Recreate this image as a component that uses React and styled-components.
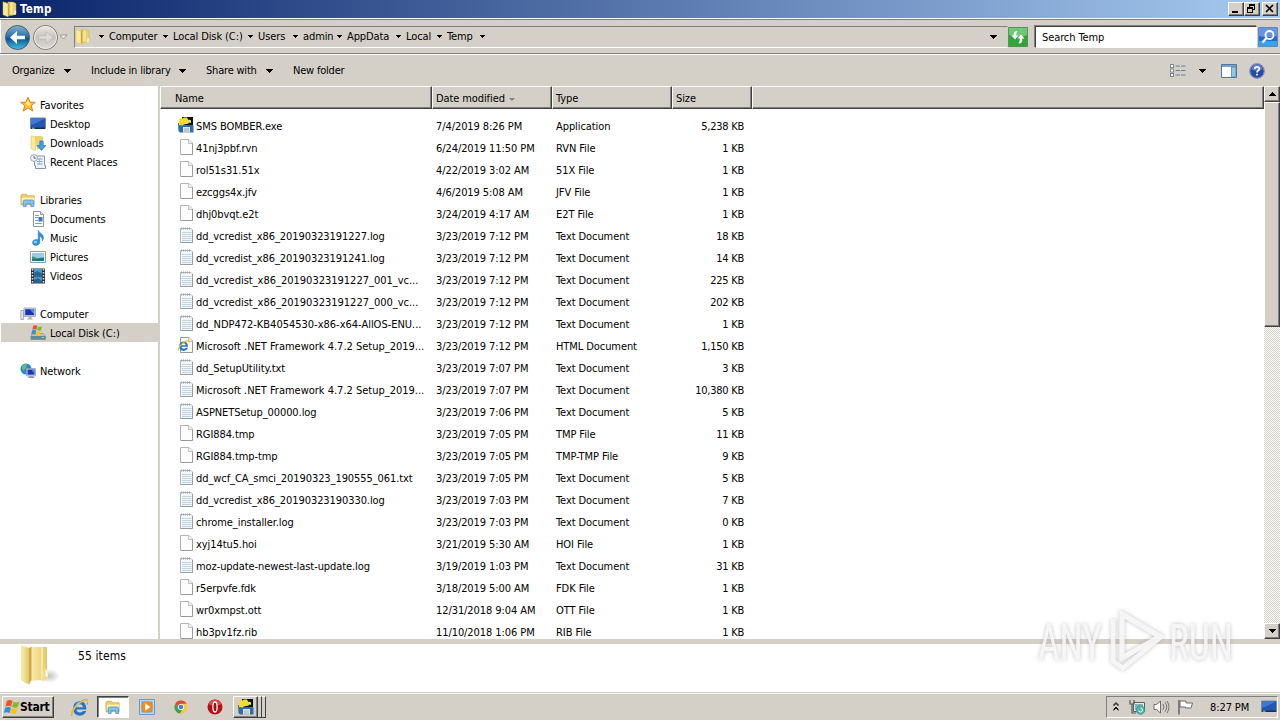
import React from 'react'
import styled, { createGlobalStyle, css } from 'styled-components'

const GlobalStyle = createGlobalStyle`
  * { box-sizing: border-box; }
  html, body { margin: 0; padding: 0; overflow: hidden; }
  svg { display: block; flex: none; }
`;

const face = '#d4d0c8'

const raised = css`
  background: ${face};
  border: 1px solid;
  border-color: #fff #404040 #404040 #fff;
  box-shadow: inset -1px -1px 0 #808080;
`;

const Screen = styled.div`
  width: 1280px;
  height: 720px;
  display: flex;
  flex-direction: column;
  background: ${face};
  color: #000;
  font-family: "DejaVu Sans Condensed", "DejaVu Sans", sans-serif;
  font-stretch: condensed;
  font-size: 11px;
  letter-spacing: -0.1px;
  line-height: 14px;
  white-space: nowrap;
  cursor: default;
  position: relative;
`;

const TitleBar = styled.div`
  height: 18px;
  display: flex;
  align-items: center;
  gap: 2px;
  padding: 0 2px;
  background: linear-gradient(90deg, #0a246a, #a6caf0);
`;
const Title = styled.span`
  flex: 1;
  color: #fff;
  font-weight: 700;
  font-size: 11.5px;
  letter-spacing: 0.2px;
`;
const Controls = styled.div`
  display: flex;
  align-self: flex-end;
`;
const ControlButton = styled.div`
  ${raised}
  width: 16px;
  height: 14px;
  margin-left: ${(p) => p.$gap || 0}px;
  margin-bottom: 2px;
`;

const AddressRow = styled.div`
  height: 37px;
  display: flex;
  align-items: center;
  padding-left: 4px;
  border-top: 1px solid #fff;
  border-bottom: 1px solid #fff;
  box-shadow: inset 0 1px 0 #808080, inset 0 -1px 0 #808080, inset 1px 0 0 #fff;
`;
const AddressBox = styled.div`
  width: 934px;
  height: 22px;
  margin-left: 6px;
  padding-right: 10px;
  display: flex;
  align-items: center;
  border: 1px solid;
  border-color: #808080 ${face} #fff #808080;
`;
const Crumb = styled.span`
  flex: none;
  width: ${(p) => p.$w}px;
  padding-right: 5px;
  display: flex;
  align-items: center;
  justify-content: space-between;
`;
const CrumbRoot = styled.span`
  width: 18px;
  padding-left: 7px;
`;
const Spacer = styled.div`
  flex: 1;
`;
const SearchBox = styled.div`
  width: 222px;
  height: 22px;
  margin: 0 1px 0 7px;
  padding: 4px 6px;
  background: #fff;
  border: 1px solid;
  border-color: #404040 #fff #fff #404040;
  box-shadow: -1px -1px 0 #808080;
`;

const ToolBar = styled.div`
  height: 31px;
  display: flex;
  align-items: center;
  padding: 0 15px 0 12px;
  letter-spacing: -0.2px;
`;
const ToolItem = styled.div`
  width: ${(p) => p.$w}px;
  margin-right: ${(p) => p.$gap}px;
  display: flex;
  align-items: center;
  justify-content: space-between;
`;

const Body = styled.div`
  height: 553px;
  display: flex;
`;
const Sidebar = styled.div`
  width: 160px;
  padding: 9px 0 0 1px;
  background: #fff;
  border-right: 2px solid ${face};
`;
const SideRow = styled.div`
  height: 19px;
  margin-top: ${(p) => (p.$first ? 19 : 0)}px;
  padding-left: ${(p) => (p.$child ? 29 : 19)}px;
  display: flex;
  align-items: center;
  gap: 4px;
  background: ${(p) => (p.$active ? face : 'transparent')};
`;
const SideName = styled.span`
  padding-top: 2px;
`;
const Main = styled.div`
  flex: 1;
  background: #fff;
`;
const HeaderRow = styled.div`
  display: flex;
  height: 23px;
`;
const HeaderCell = styled.div`
  width: ${(p) => p.$w}px;
  padding: 5px 0 0 ${(p) => p.$pad || 3}px;
  display: flex;
  gap: 4px;
  background: ${face};
  border: 1px solid;
  border-color: #fff #404040 #404040 #fff;
  box-shadow: inset -1px -1px 0 #808080;
`;
const Files = styled.div`
  height: 530px;
  padding-top: 6px;
  overflow: hidden;
`;
const FileRow = styled.div`
  height: 22px;
  display: grid;
  grid-template-columns: 18px 240px 120px 108px 80px;
  padding: 0 0 3px 18px;
  align-items: center;
`;
const Cell = styled.span`
  padding-top: 4px;
  letter-spacing: ${(p) => (p.$long ? -0.01 : -0.08)}px;
`;
const FileSize = styled.span`
  padding-top: 4px;
  text-align: right;
  letter-spacing: -0.25px;
`;

const ScrollBar = styled.div`
  width: 16px;
  display: flex;
  flex-direction: column;
  background: repeating-conic-gradient(#fff 0 25%, ${face} 0 50%) 0 0 / 2px 2px;
`;
const ScrollButton = styled.div`
  ${raised}
  height: 16px;
  display: flex;
  align-items: center;
  justify-content: center;
`;
const Thumb = styled.div`
  ${raised}
  height: 225px;
`;

const Details = styled.div`
  height: 53px;
  padding: 0 0 0 17px;
  display: flex;
  gap: 17px;
  background: #fff;
  border-top: 5px solid ${face};
`;
const Count = styled.span`
  padding-top: 5px;
  font-size: 12px;
  letter-spacing: 0.1px;
`;

const TaskBar = styled.div`
  height: 28px;
  display: flex;
  align-items: center;
  padding: 1px 2px 0;
  border-top: 1px solid ${face};
  box-shadow: inset 0 1px 0 #fff;
`;
const StartButton = styled.div`
  ${raised}
  width: 52px;
  height: 22px;
  display: flex;
  align-items: center;
  font-weight: 700;
  font-size: 12px;
  letter-spacing: -0.25px;
`;
const Quick = styled.div`
  width: 32px;
  height: 22px;
  margin-left: ${(p) => p.$gap || 0}px;
  display: flex;
  align-items: center;
  justify-content: center;
  ${(p) => p.$active && css`
    background: #fff;
    border: 1px solid;
    border-color: #404040 #fff #fff #404040;
    box-shadow: inset 1px 1px 0 #808080;
  `}
`;
const Stack = styled.div`
  display: flex;
  height: 22px;
  margin-left: 2px;
`;
const StackItem = styled.div`
  ${raised}
  width: ${(p) => p.$w}px;
  display: flex;
  align-items: center;
  justify-content: center;
`;
const StackEdge = styled.div`
  width: 4px;
  background: ${face};
  border-top: 1px solid #fff;
  border-right: 1px solid #404040;
  border-bottom: 1px solid #404040;
`;
const Tray = styled.div`
  width: 172px;
  height: 22px;
  padding: 0 0 0 6px;
  display: flex;
  align-items: center;
  gap: 7px;
  border: 1px solid;
  border-color: #808080 #fff #fff #808080;
`;
const Clock = styled.span`
  width: 44px;
  margin-left: 9px;
  padding-top: 1px;
`;
const Watermark = styled.svg`
  position: absolute;
  left: 1030px;
  top: 602px;
  overflow: visible;
`;

/* icons */

const Arrow = ({ size = 7, fill = '#000', up }) => (
  <svg width={size} height={Math.ceil(size / 2)} viewBox="0 0 8 4" shapeRendering="crispEdges">
    <path d={up ? 'M0 4H8L4 0Z' : 'M0 0H8L4 4Z'} fill={fill} />
  </svg>
)

const FolderIcon = ({ w = 16, h = 16 }) => (
  <svg width={w} height={h} viewBox="0 0 16 16">
    <path d="M6 1h5l3 1.500v10L10 14.500H6z" fill="#ecd16c" stroke="#c9a843" strokeWidth=".4" />
    <path d="M1 .8 6 2.500V15.800L1 13.800z" fill="#fbeaa0" stroke="#d5b64f" strokeWidth=".5" />
    <path d="M6 2.500 7.400 1.500V14L6 15.800z" fill="#c9a545" />
    <path d="M8.300 2h2.200v11H8.300z" fill="#f9e79a" />
    <path d="M12.500 9l1.500 1v3.500l-2.500.5z" fill="#fff8d8" stroke="#d9c476" strokeWidth=".3" />
  </svg>
)

const BigFolder = () => (
  <svg width="44" height="44" viewBox="0 0 44 44">
    <defs>
      <linearGradient id="bf" x1="0" x2="1">
        <stop offset="0" stopColor="#fbeeb0" />
        <stop offset="1" stopColor="#e3c866" />
      </linearGradient>
      <radialGradient id="bs">
        <stop offset="0" stopColor="#999" stopOpacity=".6" />
        <stop offset="1" stopColor="#999" stopOpacity="0" />
      </radialGradient>
    </defs>
    <ellipse cx="32" cy="32" rx="11" ry="7" fill="url(#bs)" />
    <path d="M13 3h17v30l-4 3-13 1z" fill="url(#bf)" />
    <path d="M24 3l2 .5v32l-2 .5z" fill="#f8e9a8" />
    <path d="M27 23l4 5v7l-6 2z" fill="#f1dc8c" />
    <path d="M4 1 12 4v36.500l-8-4z" fill="url(#bf)" />
    <path d="M12 4l2.500-1.500v33l-2.500 5z" fill="#cba94c" />
    <path d="M28.500 25l2 3v5l-2-1z" fill="#fff" />
  </svg>
)

const ExplorerIcon = () => (
  <svg width="16" height="16" viewBox="0 0 17 16">
    <path d="M1 3.500 2 2h5l1 1.500h7V13H1z" fill="#edcf6b" stroke="#c49e3c" strokeWidth=".7" />
    <path d="M2 5.500h13v5H2z" fill="#fff1b4" />
    <path d="M3.500 15V9.500q0-1.500 1.500-1.500h8q1.500 0 1.500 1.500V15H11.500v-3H6.500v3z" fill="#7fc3ee" stroke="#3a87c0" strokeWidth=".7" />
  </svg>
)

const StarIcon = () => (
  <svg width="16" height="16" viewBox="0 0 16 16">
    <path d="M8 .3l2.100 5h5.200l-4.200 3.300 1.700 5.500L8 10.900l-4.800 3.200 1.700-5.500L.7 5.300h5.200z" fill="#ffc832" stroke="#e07f18" />
    <path d="M8 3l1.200 3.300h3L9 8.500 5.500 6.500z" fill="#ffe98b" />
  </svg>
)

const DesktopIcon = ({ w = 16 }) => (
  <svg width={w} height={w} viewBox="0 0 16 16">
    <path d="M.5 2h15v10.500H.5z" fill="#2456b4" stroke="#7888a8" />
    <path d="M1 2.500h14L3 8.500 1 8z" fill="#4079d0" />
    <path d="M1 11.500h14V13H1z" fill="#1a2c58" />
    <path d="M2 11.500h2.500V13H2z" fill="#62b760" />
  </svg>
)

const DownloadsIcon = () => (
  <svg width="16" height="16" viewBox="0 0 16 16">
    <path d="M5 1h6.500l1.500 1v11l-6 1.500z" fill="#ecd16c" />
    <path d="M1 .8 5.500 2v13.500L1 13.500z" fill="#fbeaa0" stroke="#d5b64f" strokeWidth=".5" />
    <path d="M9.800 6h3.400v4.500H16L11.500 15.500 7 10.500h2.800z" fill="#3aa0e8" stroke="#1c6cb4" strokeWidth=".6" />
  </svg>
)

const RecentIcon = () => (
  <svg width="16" height="16" viewBox="0 0 16 16">
    <path d="M4.500 2h10v9.500h1v3H5.500v-3h-1z" fill="#eef3f8" stroke="#8698ac" />
    <path d="M7 5h5.500M7 7.500h5.500M7 10h5.500" stroke="#7fa0c4" />
    <path d="M9.500 4v7" stroke="#a8bdd4" />
    <circle cx="4" cy="4" r="3.400" fill="#f7f9fb" stroke="#9aa6b2" />
    <path d="M4 2v2.200h1.800" fill="none" stroke="#445" strokeWidth=".8" />
  </svg>
)

const DocumentsIcon = () => (
  <svg width="16" height="16" viewBox="0 0 16 16">
    <path d="M3.500.5h7l3 3v12h-10z" fill="#fff" stroke="#8c98a8" />
    <path d="M10.500.5v3h3" fill="#dde5ee" stroke="#8c98a8" />
    <path d="M5 4.500h4M5 6.500h3M5 9.500h3M5 12.500h7" stroke="#7d9cc8" />
    <path d="M8.500 6h4v4.500h-4z" fill="#3f77b8" />
  </svg>
)

const MusicIcon = () => (
  <svg width="16" height="16" viewBox="0 0 16 16">
    <path d="M8.200 0c.5 3 5.300 3.500 5.300 7.500 0 1.500-.5 2.500-1.300 3.500.2-3-.8-4.300-2.400-4.800V12c0 2-1.800 3.500-4 3.500S2.500 14.300 2.500 12.500 4.200 9.500 6.500 9.500h1.700z" fill="#2e8fdc" stroke="#1b6cb0" strokeWidth=".4" />
    <ellipse cx="5.500" cy="12" rx="1.800" ry="1.300" fill="#8fd0fa" />
  </svg>
)

const PicturesIcon = () => (
  <svg width="16" height="16" viewBox="0 0 16 16">
    <path d="M.5 2.500h15v11H.5z" fill="#fff" stroke="#8a9bb0" />
    <path d="M2 4h12v8H2z" fill="#8fd0ee" />
    <path d="M2 8l4 1.500 8-1V12H2z" fill="#23708a" />
    <path d="M2 7.500l3 .5 3 2-6 .5z" fill="#3c9a70" />
  </svg>
)

const VideosIcon = () => (
  <svg width="16" height="16" viewBox="0 0 16 16">
    <path d="M1 .5h14v15H1z" fill="#27303c" />
    <path d="M4 1h8v6.500H4zM4 8.500h8V15H4z" fill="#4a9ad0" />
    <path d="M4 5l3-2 5 2.500v2H4zM4 12l4-2 4 3v2H4z" fill="#276490" />
    <path d="M2.500 1v14M13.500 1v14" stroke="#e8edf2" strokeWidth="1.500" strokeDasharray="1.500 1.500" />
  </svg>
)

const ComputerIcon = () => (
  <svg width="16" height="16" viewBox="0 0 16 16">
    <path d="M.8 4.500h2.700v9H.8z" fill="#dfe3e8" stroke="#8b929c" strokeWidth=".7" />
    <path d="M4 2h11.500v8.500H4z" fill="#d8dce4" stroke="#8f97a8" strokeWidth=".7" />
    <path d="M5.200 3.200h9v6h-9z" fill="#1732b0" />
    <path d="M9.500 3.200h4.700v5z" fill="#5a88ec" />
    <path d="M8.500 10.500h3v1.500l2 1.500h-7l2-1.500z" fill="#aab0bc" />
  </svg>
)

const Flag = () => (
  <>
    <path d="M3 1.500q2.500-1.500 4.500 0L6.500 6Q4.500 4.700 2 6z" fill="#ee5324" />
    <path d="M8.300 2q2 1.200 4.700 0l-1.200 4.300Q9.500 7.400 7.300 6.200z" fill="#80bc28" />
    <path d="M1.800 6.800q2.500-1.200 4.500 0L5.200 11Q3 10 .6 11z" fill="#2a90e0" />
    <path d="M7 7q2.500 1.200 4.600 0l-1.200 4.300q-2.400 1.100-4.500 0z" fill="#fbc319" />
  </>
)

const DiskIcon = () => (
  <svg width="16" height="16" viewBox="0 0 16 16">
    <path d="M2.500 8.500h10.500l2.500 2.500v3.500H.8v-3z" fill="#b4c2ca" stroke="#7a8890" strokeWidth=".6" />
    <path d="M1 11h14.500v3.500H1z" fill="#5e8b96" />
    <path d="M12 12h2v1h-2z" fill="#8df07c" />
    <g transform="translate(.5 -.5) scale(.9)"><Flag /></g>
  </svg>
)

const NetworkIcon = () => (
  <svg width="16" height="16" viewBox="0 0 16 16">
    <circle cx="6" cy="6" r="5.500" fill="#2b86c8" />
    <path d="M2 3q3-3 5-1.500L6 5 3.500 7.500 2 6zM6 8l3 1-2 2.300z" fill="#5cc08a" />
    <path d="M6.500 5.500h9v7.500h-9z" fill="#d8dce8" stroke="#8892b0" strokeWidth=".7" />
    <path d="M7.500 6.500h7v5.200h-7z" fill="#1736b8" />
    <path d="M11 6.500h3.500v4z" fill="#5c88ea" />
    <path d="M9 13.200h4.500l1 1.800H8.200z" fill="#8a94b0" />
  </svg>
)

const BlankFile = () => (
  <svg width="16" height="16" viewBox="0 0 16 16">
    <path d="M2.500.5h8.500l3.500 3.500v11.500h-12z" fill="#fdfdfd" stroke="#b4b4b4" />
    <path d="M3 15.500h11.500V4" fill="none" stroke="#9a9a9a" />
    <path d="M10.500.5V4.500h4" fill="#eee" stroke="#b4b4b4" strokeWidth=".8" />
  </svg>
)

const TextFile = () => (
  <svg width="16" height="16" viewBox="0 0 16 16">
    <path d="M2.500 1.500h10.500l1.500 1.500v12.500h-12z" fill="#f3f7fa" stroke="#b0b6ba" />
    <path d="M3 1.500h10" stroke="#9da3a8" strokeWidth="2" strokeDasharray="1 1" />
    <path d="M4 5.500h9.500M4 7.500h9.500M4 9.500h9.500M4 11.500h9.500M4 13.500h9.500" stroke="#c0d5e2" />
    <path d="M14.500 3v12.500h-12" fill="none" stroke="#989da2" />
  </svg>
)

const IeMark = () => (
  <>
    <path d="M12.800 9.300H5.500q.3 2.200 2.700 2.200 1.400 0 2.200-1.100h2.300Q11.500 13.800 8 13.800q-5-.3-5-5.300.2-5.200 5.100-5.300 4.800.2 4.700 6.100zM5.600 7.500h4.700Q10 5.300 8 5.300T5.600 7.500z" fill="#2673c8" />
    <path d="M2.500 14.500Q-.5 12 5 6q6-5.500 9-4 1.500 1-.3 4 .6-2.500-.7-3-2.500-.4-6.800 3.700-4.500 5-3.700 7.800z" fill="#efc028" />
  </>
)

const HtmlFile = () => (
  <svg width="16" height="16" viewBox="0 0 16 16">
    <path d="M2.500.5h8.500l3.500 3.500v11.500h-12z" fill="#fdfdfd" stroke="#999" />
    <path d="M10.500.5V4.500h4" fill="#eee" stroke="#b4b4b4" strokeWidth=".8" />
    <g transform="translate(-1.500 1.500) scale(.9)"><IeMark /></g>
  </svg>
)

const IeIcon = () => (
  <svg width="17" height="17" viewBox="1.500 1.500 12.500 12.500">
    <path d="M2 14q-1-2.500 3.500-8Q11 .500 14 2.500q.500 2-.500 3" fill="none" stroke="#2673c8" strokeWidth=".6" />
    <IeMark />
    <path d="M5 7.500Q5.500 4 8.500 4" fill="none" stroke="#7cc4f4" strokeWidth=".9" />
  </svg>
)

const ExeIcon = ({ w = 16 }) => (
  <svg width={w} height={w} viewBox="0 0 16 16">
    <path d="M4 0h11v9H4z" fill="#0c1210" />
    <path d="M0 6h5l3 2h7l.5 1v6.500H2l-1.500-1.500z" fill="#2d6eaa" />
    <path d="M1 1.500h3.500L6 .5h3l1 2 1.500 1v2.500L9 7H6L4.500 8.500 1 8z" fill="#f8dc26" />
    <path d="M11 2.500l2 1v2.500l-2-1z" fill="#e8e8d0" />
    <path d="M5 10h7v5.500H5z" fill="#dfe6ec" />
    <path d="M6 12h5M6 14h5" stroke="#9caab8" />
  </svg>
)

const BackButton = () => (
  <svg width="27" height="28" viewBox="0 0 27 28">
    <defs>
      <linearGradient id="bk" x1="0" y1="0" x2="0" y2="1">
        <stop offset="0" stopColor="#8ab0cc" />
        <stop offset=".45" stopColor="#2776ad" />
        <stop offset=".55" stopColor="#0f558f" />
        <stop offset="1" stopColor="#3fc3ee" />
      </linearGradient>
    </defs>
    <circle cx="13.500" cy="14.500" r="12" fill="url(#bk)" stroke="#4c5c6c" />
    <path d="M6 14.500l7-6.500v4.700h8v3.600h-8v4.700z" fill="#fff" />
  </svg>
)

const ForwardButton = () => (
  <svg width="28" height="28" viewBox="0 0 28 28">
    <defs>
      <linearGradient id="fw" x1="0" y1="0" x2="0" y2="1">
        <stop offset="0" stopColor="#ebe9e6" />
        <stop offset=".5" stopColor="#c6c3be" />
        <stop offset="1" stopColor="#dedbd6" />
      </linearGradient>
    </defs>
    <circle cx="14.500" cy="14.500" r="12" fill="url(#fw)" stroke="#77756f" />
    <circle cx="14.500" cy="14.500" r="11" fill="none" stroke="#efede9" />
    <path d="M22 14.500l-7-6v4.300H7.500v3.400H15V20.500z" fill="#dddad5" stroke="#b5b2ac" strokeWidth=".6" />
  </svg>
)

const RefreshIcon = () => (
  <svg width="20" height="20" viewBox="0 0 20 20">
    <path d="M.5.500h19v19H.500z" fill="#2fa53a" stroke="#5b8f5e" />
    <path d="M1 1h18v7q-9 4-18 0z" fill="#6fc874" />
    <path d="M9.500 4Q5 4 5.800 8.500H3.500L7 12.500 10.500 8.500H8.200Q8 6 9.500 4z" fill="#fff" />
    <path d="M10.500 16.500q4.500 0 3.700-5h2.300L13 7.500 9.500 11.500h2.300q.2 3-1.300 5z" fill="#fff" />
  </svg>
)

const SearchIcon = () => (
  <svg width="20" height="20" viewBox="0 0 20 20">
    <path d="M.5.500h19v19H.500z" fill="#2b68cc" stroke="#6688b8" />
    <path d="M1 1h18v8Q9 11 1 9z" fill="#6795df" />
    <path d="M1 14h18v5H1z" fill="#38a4e8" />
    <circle cx="11.500" cy="8" r="4" fill="none" stroke="#fff" strokeWidth="1.800" />
    <path d="M8.500 11 4.500 15.500" stroke="#fff" strokeWidth="2.400" />
  </svg>
)

const ViewIcon = () => (
  <svg width="16" height="14" viewBox="0 0 16 14">
    {[1, 5.500, 10].map((y) => (
      <g key={y}>
        <rect x=".5" y={y - 0.5} width="3" height="3" fill="#fff" stroke="#7c8794" />
        <path d={`M5.500 ${y + 1}h4.500M11 ${y + 1}h4.500`} stroke="#69809c" />
      </g>
    ))}
  </svg>
)

const PaneIcon = () => (
  <svg width="16" height="14" viewBox="0 0 16 14">
    <path d="M.5.500h15v13H.500z" fill="#fff" stroke="#50779c" />
    <path d="M1 2h14" stroke="#7ba2c4" strokeWidth="2" />
    <path d="M10.500 3h4.500v10h-4.500z" fill="#8ccbe8" stroke="#50779c" strokeWidth=".7" />
  </svg>
)

const HelpIcon = () => (
  <svg width="16" height="16" viewBox="0 0 16 16">
    <circle cx="8" cy="8" r="7.300" fill="#2848a8" stroke="#8c96b4" strokeWidth="1.200" />
    <path d="M2.500 6.500a5.500 5 0 0 1 11 0q-5 2.500-11 0z" fill="#5c7fd0" />
    <path d="M5.700 6Q5.800 3.900 8 3.900t2.300 1.900Q10.300 7 9 7.700q-1 .6-1 1.700M8 10.800v1.700" fill="none" stroke="#fff" strokeWidth="1.700" />
  </svg>
)

const StartFlag = () => (
  <svg width="17" height="16" viewBox="0 0 13.500 12.500"><Flag /></svg>
)

const MediaIcon = () => (
  <svg width="16" height="16" viewBox="0 0 16 16">
    <path d="M.5.500h15v15H.500z" fill="#b6daf4" stroke="#5c9fd4" />
    <path d="M2.500 2.500h11v11h-11z" fill="#5ca4dc" />
    <circle cx="8" cy="8" r="5.800" fill="#f58a16" />
    <path d="M6.200 4.200 11.500 8l-5.300 3.800z" fill="#fff" />
  </svg>
)

const ChromeIcon = () => (
  <svg width="14" height="14" viewBox="0 0 16 16">
    <circle cx="8" cy="8" r="7.500" fill="#fbc934" />
    <path d="M1.500 4.300A7.500 7.500 0 0 1 14.500 4.300H8L5 9.500z" fill="#e04a3a" />
    <path d="M1.500 4.300 5 10l4 1.500-2 4A7.500 7.500 0 0 1 1.500 4.300z" fill="#35a455" />
    <circle cx="8" cy="8" r="3.500" fill="#fff" />
    <circle cx="8" cy="8" r="2.700" fill="#3f80e8" />
  </svg>
)

const OperaIcon = () => (
  <svg width="16" height="16" viewBox="0 0 16 16">
    <circle cx="8" cy="8" r="7.500" fill="#b81018" />
    <path d="M1.500 5Q3.500.8 8 .8T14.500 5Q8 8 1.500 5z" fill="#dc4a48" />
    <ellipse cx="8" cy="8" rx="2.100" ry="5" fill="#a00c14" stroke="#fff" strokeWidth="1.300" />
  </svg>
)

const TrayArrows = () => (
  <svg width="9" height="12" viewBox="0 0 9 12">
    <path d="M.5 4l2.500-2.500L5.500 4M.5 8.500l2.500-2.500 2.500 2.500M.5 5l2.500-2.500L5.500 5M.5 9.500l2.500-2.500 2.500 2.500" fill="none" stroke="#000" strokeWidth=".9" />
  </svg>
)

const NetTrayIcon = () => (
  <svg width="17" height="17" viewBox="0 0 17 17">
    <path d="M4.500 3.500h11v9h-11z" fill="#e4eef0" stroke="#4f6468" />
    <path d="M6 5h8v6H6z" fill="#7fb4b8" />
    <path d="M1 1v4h4V1M3 5v9h4" fill="none" stroke="#55595c" strokeWidth="1.200" />
    <circle cx="11.500" cy="11" r="4.300" fill="#4fb2aa" stroke="#2f8a86" strokeWidth=".6" />
    <path d="M9.500 11.500a2 2 0 1 0 2-2.500" fill="none" stroke="#fff" />
  </svg>
)

const SpeakerIcon = () => (
  <svg width="17" height="16" viewBox="0 0 17 16">
    <path d="M1 5.500h2.500L7.500 2v12L3.500 10.500H1z" fill="#fafafa" stroke="#6c6c6c" />
    <path d="M10 5q2 3 0 6M12 3.300q3.500 4.700 0 9.400M14 2q4 6 0 12" fill="none" stroke="#777" />
  </svg>
)

const FlagIcon = () => (
  <svg width="17" height="16" viewBox="0 0 17 16">
    <path d="M2 1v14.500" stroke="#6a6a6a" strokeWidth="1.600" />
    <path d="M3 2h6v2h6.500L14 9H8.500V8H3z" fill="#fff" stroke="#6a6a6a" />
  </svg>
)

const crumbs = [
  ['Computer', 64],
  ['Local Disk (C:)', 85],
  ['Users', 45],
  ['admin', 44],
  ['AppData', 59],
  ['Local', 41],
  ['Temp', 43],
]

const places = [
  ['Favorites', StarIcon],
  ['Desktop', DesktopIcon, true],
  ['Downloads', DownloadsIcon, true],
  ['Recent Places', RecentIcon, true],
  ['Libraries', ExplorerIcon],
  ['Documents', DocumentsIcon, true],
  ['Music', MusicIcon, true],
  ['Pictures', PicturesIcon, true],
  ['Videos', VideosIcon, true],
  ['Computer', ComputerIcon],
  ['Local Disk (C:)', DiskIcon, true],
  ['Network', NetworkIcon],
]

const files = [
  ['SMS BOMBER.exe', '7/4/2019 8:26 PM', 'Application', '5,238 KB'],
  ['41nj3pbf.rvn', '6/24/2019 11:50 PM', 'RVN File', '1 KB'],
  ['rol51s31.51x', '4/22/2019 3:02 AM', '51X File', '1 KB'],
  ['ezcggs4x.jfv', '4/6/2019 5:08 AM', 'JFV File', '1 KB'],
  ['dhj0bvqt.e2t', '3/24/2019 4:17 AM', 'E2T File', '1 KB'],
  ['dd_vcredist_x86_20190323191227.log', '3/23/2019 7:12 PM', 'Text Document', '18 KB'],
  ['dd_vcredist_x86_20190323191241.log', '3/23/2019 7:12 PM', 'Text Document', '14 KB'],
  ['dd_vcredist_x86_20190323191227_001_vc...', '3/23/2019 7:12 PM', 'Text Document', '225 KB'],
  ['dd_vcredist_x86_20190323191227_000_vc...', '3/23/2019 7:12 PM', 'Text Document', '202 KB'],
  ['dd_NDP472-KB4054530-x86-x64-AllOS-ENU...', '3/23/2019 7:12 PM', 'Text Document', '1 KB'],
  ['Microsoft .NET Framework 4.7.2 Setup_2019...', '3/23/2019 7:12 PM', 'HTML Document', '1,150 KB'],
  ['dd_SetupUtility.txt', '3/23/2019 7:07 PM', 'Text Document', '3 KB'],
  ['Microsoft .NET Framework 4.7.2 Setup_2019...', '3/23/2019 7:07 PM', 'Text Document', '10,380 KB'],
  ['ASPNETSetup_00000.log', '3/23/2019 7:06 PM', 'Text Document', '5 KB'],
  ['RGI884.tmp', '3/23/2019 7:05 PM', 'TMP File', '11 KB'],
  ['RGI884.tmp-tmp', '3/23/2019 7:05 PM', 'TMP-TMP File', '9 KB'],
  ['dd_wcf_CA_smci_20190323_190555_061.txt', '3/23/2019 7:05 PM', 'Text Document', '5 KB'],
  ['dd_vcredist_x86_20190323190330.log', '3/23/2019 7:03 PM', 'Text Document', '7 KB'],
  ['chrome_installer.log', '3/23/2019 7:03 PM', 'Text Document', '0 KB'],
  ['xyj14tu5.hoi', '3/21/2019 5:30 AM', 'HOI File', '1 KB'],
  ['moz-update-newest-last-update.log', '3/19/2019 1:03 PM', 'Text Document', '31 KB'],
  ['r5erpvfe.fdk', '3/18/2019 5:00 AM', 'FDK File', '1 KB'],
  ['wr0xmpst.ott', '12/31/2018 9:04 AM', 'OTT File', '1 KB'],
  ['hb3pv1fz.rib', '11/10/2018 1:06 PM', 'RIB File', '1 KB'],
]

const fileIcons = {
  Application: ExeIcon,
  'Text Document': TextFile,
  'HTML Document': HtmlFile,
}

export default function App() {
  return (
    <Screen>
      <GlobalStyle />
      <TitleBar>
        <FolderIcon />
        <Title>Temp</Title>
        <Controls>
          <ControlButton>
            <svg width="14" height="12" shapeRendering="crispEdges"><path d="M3 8h6v2H3z" /></svg>
          </ControlButton>
          <ControlButton>
            <svg width="14" height="12" shapeRendering="crispEdges">
              <path d="M4 1h6v6H8V6h1V3H5v1H4zM2 4h6v6H2zM3 6v3h4V6z" fillRule="evenodd" />
            </svg>
          </ControlButton>
          <ControlButton $gap={2}>
            <svg width="14" height="12"><path d="M3 2l7 7M10 2l-7 7" stroke="#000" strokeWidth="1.600" /></svg>
          </ControlButton>
        </Controls>
      </TitleBar>

      <AddressRow>
        <BackButton />
        <ForwardButton />
        <svg width="9" height="8" viewBox="0 0 9 8">
          <path d="M1 2h7L4.500 6z" fill="#f4f2ee" stroke="#8a8883" strokeWidth=".8" />
        </svg>
        <AddressBox>
          <FolderIcon w={16} h={17} />
          <CrumbRoot><Arrow size={6} /></CrumbRoot>
          {crumbs.map(([name, w]) => (
            <Crumb key={name} $w={w}>{name}<Arrow size={6} /></Crumb>
          ))}
          <Spacer />
          <Arrow size={8} />
        </AddressBox>
        <RefreshIcon />
        <SearchBox>Search Temp</SearchBox>
        <SearchIcon />
      </AddressRow>

      <ToolBar>
        <ToolItem $w={59} $gap={20}>Organize<Arrow size={8} /></ToolItem>
        <ToolItem $w={95} $gap={20}>Include in library<Arrow size={8} /></ToolItem>
        <ToolItem $w={67} $gap={20}>Share with<Arrow size={8} /></ToolItem>
        <ToolItem $w={54} $gap={0}>New folder</ToolItem>
        <Spacer />
        <ToolItem $w={36} $gap={15}><ViewIcon /><Arrow size={8} /></ToolItem>
        <ToolItem $w={44} $gap={0}><PaneIcon /><HelpIcon /></ToolItem>
      </ToolBar>

      <Body>
        <Sidebar>
          {places.map(([name, Icon, child], i) => (
            <SideRow key={i} $child={child} $first={!child && i > 0} $active={i === 10}>
              <Icon />
              <SideName>{name}</SideName>
            </SideRow>
          ))}
        </Sidebar>
        <Main>
          <HeaderRow>
            <HeaderCell $w={272} $pad={14}>Name</HeaderCell>
            <HeaderCell $w={120}>
              Date modified
              <svg width="6" height="12" viewBox="0 0 6 12"><path d="M0 6h6L3 9z" fill="#808080" /></svg>
            </HeaderCell>
            <HeaderCell $w={120}>Type</HeaderCell>
            <HeaderCell $w={80}>Size</HeaderCell>
            <HeaderCell $w={512} />
          </HeaderRow>
          <Files>
            {files.map(([name, date, type, size], i) => {
              const Icon = fileIcons[type] || BlankFile
              return (
                <FileRow key={i}>
                  <Icon />
                  <Cell $long={name.endsWith('...')}>{name}</Cell>
                  <Cell>{date}</Cell>
                  <Cell>{type}</Cell>
                  <FileSize>{size}</FileSize>
                </FileRow>
              )
            })}
          </Files>
        </Main>
        <ScrollBar>
          <ScrollButton><Arrow size={8} up /></ScrollButton>
          <Thumb />
          <Spacer />
          <ScrollButton><Arrow size={8} /></ScrollButton>
        </ScrollBar>
      </Body>

      <Details>
        <BigFolder />
        <Count>55 items</Count>
      </Details>

      <TaskBar>
        <StartButton><StartFlag />Start</StartButton>
        <Quick $gap={9}><IeIcon /></Quick>
        <Quick $active $gap={2}><ExplorerIcon /></Quick>
        <Quick $gap={2}><MediaIcon /></Quick>
        <Quick $gap={2}><ChromeIcon /></Quick>
        <Quick $gap={2}><OperaIcon /></Quick>
        <Stack>
          <StackItem $w={25}><ExeIcon /></StackItem>
          <StackEdge />
          <StackEdge />
        </Stack>
        <Spacer />
        <Tray>
          <TrayArrows />
          <NetTrayIcon />
          <SpeakerIcon />
          <FlagIcon />
          <Clock>8:27 PM</Clock>
          <DesktopIcon />
        </Tray>
      </TaskBar>

      <Watermark width="210" height="76" viewBox="0 0 210 76">
        <defs>
          <filter id="glow" x="-10%" y="-20%" width="120%" height="140%">
            <feDropShadow dx="0" dy="0" stdDeviation="2.200" floodColor="#888" floodOpacity=".6" />
          </filter>
        </defs>
        <g filter="url(#glow)" fill="#f6f6f6" fontFamily="Roboto, sans-serif" fontSize="50" letterSpacing="0" opacity=".9">
          <text x="8" y="58" textLength="64" lengthAdjust="spacingAndGlyphs">ANY</text>
          <text x="139" y="58" textLength="64" lengthAdjust="spacingAndGlyphs">RUN</text>
          <path d="M83 17v42l10 7 38-31" fill="none" stroke="#f6f6f6" strokeWidth="4.500" />
          <path d="M92 12l38 22.500L92 56z" fill="none" stroke="#f6f6f6" strokeWidth="5" />
        </g>
      </Watermark>
    </Screen>
  )
}
